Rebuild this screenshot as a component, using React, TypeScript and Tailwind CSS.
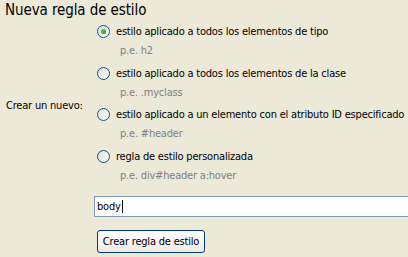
import React from "react";

function Radio({ checked }: { checked?: boolean }) {
  return (
    <svg width="13" height="13" viewBox="0 0 13 13" className="shrink-0">
      <defs>
        <linearGradient id="rg" x1="0" y1="0" x2="1" y2="1">
          <stop offset="0" stopColor="#DCDCD7" />
          <stop offset="1" stopColor="#FFFFFF" />
        </linearGradient>
        <radialGradient id="dot" cx="0.4" cy="0.4" r="0.6">
          <stop offset="0" stopColor="#55D551" />
          <stop offset="1" stopColor="#21A121" />
        </radialGradient>
      </defs>
      <circle cx="6.5" cy="6.5" r="6" fill="url(#rg)" stroke="#1C5180" strokeWidth="1" />
      {checked && <circle cx="6.5" cy="6.5" r="2.5" fill="url(#dot)" />}
    </svg>
  );
}

function Option({ label, hint, checked }: { label: string; hint: string; checked?: boolean }) {
  return (
    <div className="flex flex-col h-[41.5px]">
      <div className="flex items-center h-[13px] pl-[3px] gap-[6px] whitespace-nowrap">
        <Radio checked={checked} />
        <span className="text-black leading-[13px]">{label}</span>
      </div>
      <div className="pl-[26px] mt-[6px] text-[#808080] leading-[13px] whitespace-nowrap">{hint}</div>
    </div>
  );
}

export default function App() {
  return (
    <div
      className="w-[408px] h-[257px] bg-[#ECE9D8] overflow-hidden text-[11px] tracking-[-0.2px]"
      style={{ fontFamily: "Tahoma, 'DejaVu Sans Condensed', 'Liberation Sans', sans-serif" }}
    >
      <div className="pl-[5px] pt-[1px] h-[25px] text-[15px] leading-[18px] text-black tracking-[-0.1px]">Nueva regla de estilo</div>
      <div className="flex">
        <div className="w-[94px] pl-[6px] flex items-center text-black pb-[4px] whitespace-nowrap">Crear un nuevo:</div>
        <div className="flex flex-col">
          <Option checked label="estilo aplicado a todos los elementos de tipo" hint="p.e. h2" />
          <Option label="estilo aplicado a todos los elementos de la clase" hint="p.e. .myclass" />
          <Option label="estilo aplicado a un elemento con el atributo ID especificado" hint="p.e. #header" />
          <Option label="regla de estilo personalizada" hint="p.e. div#header a:hover" />
        </div>
      </div>
      <div className="pl-[94px] mt-[5px]">
        <div className="h-[21px] w-[330px] bg-white border border-[#7F9DB9] flex items-center pl-[2px] text-black leading-[13px]">
          body<span className="inline-block w-px h-[13px] bg-black ml-px" />
        </div>
      </div>
      <div className="pl-[97px] mt-[13px]">
        <button className="h-[23px] w-[108px] rounded-[3px] border border-[#003C74] bg-gradient-to-b from-white to-[#ECEBE6] text-black text-[11px] leading-[13px] whitespace-nowrap">
          Crear regla de estilo
        </button>
      </div>
    </div>
  );
}
